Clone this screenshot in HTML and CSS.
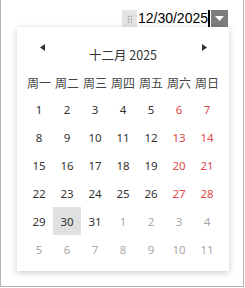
FILE: index.html
```html
<!DOCTYPE html>
<html>
<head>
<meta charset="utf-8">
<link rel="stylesheet" href="styles.css">
</head>
<body>
<div class="frame">
  <div class="field-row">
    <div class="field">
      <span class="grip"><span class="dots"></span></span>
      <span class="value">12/30/2025</span><span class="caret"></span>
      <span class="drop"><svg width="9" height="5" viewBox="0 0 9 5"><path d="M0 0h9L4.5 5z" fill="#fff"/></svg></span>
    </div>
  </div>
  <div class="popup">
    <div class="head">
      <span class="nav"><svg width="5" height="7" viewBox="0 0 5 7"><path d="M5 0v7L0 3.5z" fill="#333"/></svg></span>
      <span class="title">十二月 2025</span>
      <span class="nav"><svg width="5" height="7" viewBox="0 0 5 7"><path d="M0 0v7l5-3.5z" fill="#333"/></svg></span>
    </div>
    <div class="grid">
      <span class="wd">周一</span><span class="wd">周二</span><span class="wd">周三</span><span class="wd">周四</span><span class="wd">周五</span><span class="wd">周六</span><span class="wd">周日</span>
      <span class="d">1</span><span class="d">2</span><span class="d">3</span><span class="d">4</span><span class="d">5</span><span class="d we">6</span><span class="d we">7</span>
      <span class="d">8</span><span class="d">9</span><span class="d">10</span><span class="d">11</span><span class="d">12</span><span class="d we">13</span><span class="d we">14</span>
      <span class="d">15</span><span class="d">16</span><span class="d">17</span><span class="d">18</span><span class="d">19</span><span class="d we">20</span><span class="d we">21</span>
      <span class="d">22</span><span class="d">23</span><span class="d">24</span><span class="d">25</span><span class="d">26</span><span class="d we">27</span><span class="d we">28</span>
      <span class="d">29</span><span class="d sel">30</span><span class="d">31</span><span class="d om">1</span><span class="d om">2</span><span class="d om">3</span><span class="d om">4</span>
      <span class="d om">5</span><span class="d om">6</span><span class="d om">7</span><span class="d om">8</span><span class="d om">9</span><span class="d om">10</span><span class="d om">11</span>
    </div>
  </div>
</div>
</body>
</html>
```

FILE: styles.css
```css
html, body {
  margin: 0;
  padding: 0;
  background: #fff;
}
.frame {
  position: relative;
  box-sizing: border-box;
  width: 244px;
  height: 287px;
  border: 1px solid #b4b4b4;
  border-top: none;
}
.field-row {
  display: flex;
  justify-content: flex-end;
  padding-top: 10px;
  padding-right: 15px;
}
.field {
  display: flex;
  align-items: stretch;
  height: 17px;
}
.grip {
  width: 15px;
  background: #e4e4e4;
  display: flex;
  align-items: center;
  justify-content: center;
}
.dots {
  width: 5px;
  height: 8px;
  background-image: radial-gradient(circle, #9a9a9a 0.8px, transparent 1.1px);
  background-size: 3px 3px;
}
.value {
  font-family: "Liberation Sans", Arial, sans-serif;
  font-size: 14px;
  line-height: 17px;
  color: #000;
  padding-left: 1px;
}
.caret {
  width: 2px;
  background: #000;
  margin: 0 1px 0 0;
}
.drop {
  width: 17px;
  background: #7d7d7d;
  display: flex;
  align-items: center;
  justify-content: center;
}
.popup {
  position: absolute;
  left: 16px;
  top: 27px;
  width: 212px;
  box-sizing: border-box;
  padding: 0 8px 8px;
  background: #fff;
  box-shadow: 0 2px 7px rgba(0, 0, 0, 0.2);
  font-family: "Noto Sans", "Noto Sans CJK SC", sans-serif;
  color: #333;
}
.head {
  display: flex;
  align-items: center;
  justify-content: space-between;
  height: 40px;
  padding: 0 14px 0 14px;
  margin-bottom: 6px;
}
.nav {
  display: flex;
  width: 6px;
  justify-content: center;
}
.title {
  font-family: "Noto Sans CJK SC", "Noto Sans", sans-serif;
  font-size: 12.5px;
  margin-top: 15px;
  color: #333;
}
.grid {
  display: grid;
  grid-template-columns: repeat(7, 28px);
  grid-template-rows: 22px repeat(6, 28px);
}
.wd {
  font-family: "Noto Sans CJK SC", sans-serif;
  font-size: 12px;
  height: 22px;
  display: flex;
  align-items: center;
  justify-content: center;
  color: #444;
  margin-top: -2px;
  align-self: start;
}
.d {
  font-size: 11.5px;
  display: flex;
  align-items: center;
  justify-content: center;
  color: #333;
}
.we {
  color: #e2484d;
}
.om {
  color: #a8a8a8;
}
.sel {
  background: #e0e0e0;
}
```
